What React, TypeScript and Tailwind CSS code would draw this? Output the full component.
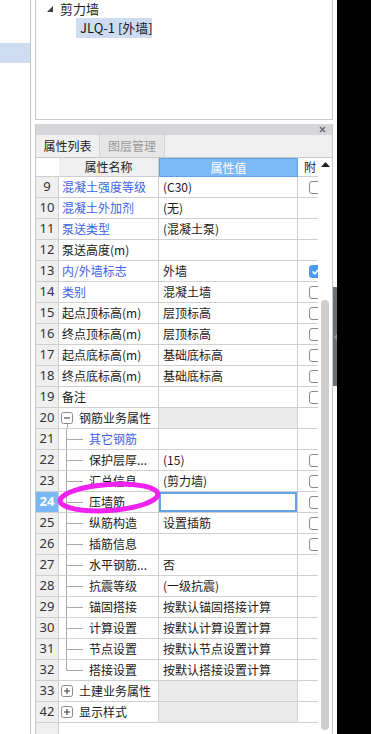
import React from "react";

type Row = {
  n: string;
  name: string;
  val?: string;
  blue?: boolean;
  cb?: boolean;
  checked?: boolean;
  kind?: "normal" | "groupOpen" | "groupClosed" | "child" | "lastChild";
  sel?: boolean;
};

const rows: Row[] = [
  { n: "9", name: "混凝土强度等级", val: "(C30)", blue: true, cb: true },
  { n: "10", name: "混凝土外加剂", val: "(无)", blue: true },
  { n: "11", name: "泵送类型", val: "(混凝土泵)", blue: true },
  { n: "12", name: "泵送高度(m)", val: "" },
  { n: "13", name: "内/外墙标志", val: "外墙", blue: true, cb: true, checked: true },
  { n: "14", name: "类别", val: "混凝土墙", blue: true, cb: true },
  { n: "15", name: "起点顶标高(m)", val: "层顶标高", cb: true },
  { n: "16", name: "终点顶标高(m)", val: "层顶标高", cb: true },
  { n: "17", name: "起点底标高(m)", val: "基础底标高", cb: true },
  { n: "18", name: "终点底标高(m)", val: "基础底标高", cb: true },
  { n: "19", name: "备注", val: "", cb: true },
  { n: "20", name: "钢筋业务属性", kind: "groupOpen" },
  { n: "21", name: "其它钢筋", kind: "child", blue: true },
  { n: "22", name: "保护层厚...", val: "(15)", kind: "child", cb: true },
  { n: "23", name: "汇总信息", val: "(剪力墙)", kind: "child", cb: true },
  { n: "24", name: "压墙筋", val: "", kind: "child", cb: true, sel: true },
  { n: "25", name: "纵筋构造", val: "设置插筋", kind: "child", cb: true },
  { n: "26", name: "插筋信息", val: "", kind: "child", cb: true },
  { n: "27", name: "水平钢筋...", val: "否", kind: "child" },
  { n: "28", name: "抗震等级", val: "(一级抗震)", kind: "child" },
  { n: "29", name: "锚固搭接", val: "按默认锚固搭接计算", kind: "child" },
  { n: "30", name: "计算设置", val: "按默认计算设置计算", kind: "child" },
  { n: "31", name: "节点设置", val: "按默认节点设置计算", kind: "child" },
  { n: "32", name: "搭接设置", val: "按默认搭接设置计算", kind: "lastChild" },
  { n: "33", name: "土建业务属性", kind: "groupClosed" },
  { n: "42", name: "显示样式", kind: "groupClosed" },
];

function GroupBox({ open }: { open: boolean }) {
  return (
    <svg width="14" height="20" className="shrink-0">
      <rect x="1.5" y="4.5" width="11" height="11" rx="2" fill="white" stroke="#8a8a8a" />
      <line x1="4" y1="10" x2="10" y2="10" stroke="#333" />
      {!open && <line x1="7" y1="7" x2="7" y2="13" stroke="#333" />}
      {open && <line x1="7.5" y1="16" x2="7.5" y2="20" stroke="#a8a8a8" />}
    </svg>
  );
}

function TreeLine({ last }: { last: boolean }) {
  return (
    <svg width="30" height="20" className="shrink-0">
      <line x1="7.5" y1="0" x2="7.5" y2={last ? 10.5 : 20} stroke="#a8a8a8" />
      <line x1="7.5" y1="10.5" x2="24" y2="10.5" stroke="#a8a8a8" />
    </svg>
  );
}

function Check({ checked }: { checked?: boolean }) {
  if (checked)
    return (
      <div className="w-[13px] h-[13px] shrink-0 rounded-[3px] bg-[#4a9cf2] border border-[#4a9cf2] flex items-center justify-center">
        <svg width="9" height="9" viewBox="0 0 9 9">
          <path d="M1.5 4.5 L3.8 6.8 L7.5 2.5" fill="none" stroke="white" strokeWidth="1.6" />
        </svg>
      </div>
    );
  return <div className="w-[13px] h-[13px] shrink-0 rounded-[3px] bg-white border border-[#8a8a8a]" />;
}

function DataRow({ r }: { r: Row }) {
  const kind = r.kind ?? "normal";
  const isGroup = kind === "groupOpen" || kind === "groupClosed";
  return (
    <div className="flex h-[21px] border-b border-[#cfcfcf]">
      <div
        className={
          "w-[23px] shrink-0 border-r border-[#cfcfcf] flex items-center justify-center font-['Noto_Sans',sans-serif] text-[13px] " +
          (r.sel ? "bg-[#7ab8f5] text-white font-bold" : "bg-[#efefef] text-[#333]")
        }
      >
        {r.n}
      </div>
      <div className="w-[100px] shrink-0 border-r border-[#cfcfcf] flex items-center overflow-hidden whitespace-nowrap bg-white">
        {kind === "normal" && (
          <span className={"pl-[3px] " + (r.blue ? "text-[#3f5fe6]" : "")}>{r.name}</span>
        )}
        {isGroup && (
          <>
            <div className="pl-[1px] flex">
              <GroupBox open={kind === "groupOpen"} />
            </div>
            <span className="ml-[5px]">{r.name}</span>
          </>
        )}
        {(kind === "child" || kind === "lastChild") && (
          <>
            <TreeLine last={kind === "lastChild"} />
            <span className={r.blue ? "text-[#3f5fe6]" : ""}>{r.name}</span>
          </>
        )}
      </div>
      <div
        className={
          "w-[139px] shrink-0 border-r border-[#cfcfcf] flex items-center pl-[4px] whitespace-nowrap overflow-hidden " +
          (isGroup ? "bg-[#ebebeb]" : "bg-white") +
          (r.sel ? " shadow-[inset_0_0_0_2px_#62a4ea]" : "")
        }
      >
        {r.val}
      </div>
      <div className="w-[20px] shrink-0 overflow-hidden flex items-center pl-[11px] bg-white">
        {r.cb && <Check checked={r.checked} />}
      </div>
    </div>
  );
}

export default function App() {
  return (
    <div className="relative flex w-[371px] h-[734px] overflow-hidden bg-white font-['Noto_Sans_CJK_SC',sans-serif] text-[12px] text-[#1a1a1a]">
      {/* left strip */}
      <div className="w-[31px] shrink-0 border-r border-[#c4c4c8] pt-[43px]">
        <div className="h-[20px] bg-[#cddcf0]" />
      </div>
      <div className="w-[4px] shrink-0" />

      {/* main column */}
      <div className="w-[298px] shrink-0 flex flex-col">
        {/* top tree panel */}
        <div className="h-[120px] shrink-0 border-x border-b border-[#c8c8c8]">
          <div className="h-[17px] flex items-center pl-[11px]">
            <svg width="6" height="6" className="shrink-0">
              <polygon points="6,0 6,6 0,6" fill="#404040" />
            </svg>
            <span className="ml-[7px] text-[13px]">剪力墙</span>
          </div>
          <div className="h-[21px] flex pl-[40px] pt-[1px]">
            <div className="h-[20px] w-[76px] bg-[#cddcf0] flex items-center pl-[4px] text-[13px] whitespace-nowrap">
              JLQ-1 [外墙]
            </div>
          </div>
        </div>
        <div className="h-[4px] shrink-0" />

        {/* property panel */}
        <div className="flex-1 border-x border-[#c8c8c8] flex flex-col min-h-0">
          <div className="h-[11px] shrink-0 bg-[#d5d6da] flex items-center justify-end pr-[6px]">
            <svg width="7" height="7">
              <path d="M1 1 L6 6 M6 1 L1 6" stroke="#6e6e6e" strokeWidth="1.6" />
            </svg>
          </div>
          <div className="h-[23px] shrink-0 bg-[#f0f0f0] border-b border-[#c8c8c8] flex">
            <div className="w-[64px] border-r border-[#d2d2d2] flex items-center justify-center text-[12px] text-[#222]">
              属性列表
            </div>
            <div className="w-[65px] border-r border-[#d2d2d2] bg-[#e6e6e6] flex items-center justify-center text-[12px] text-[#9a9a9a]">
              图层管理
            </div>
          </div>

          <div className="flex flex-1 min-h-0">
            {/* table */}
            <div className="w-[282px] shrink-0 flex flex-col">
              <div className="flex h-[19px] shrink-0">
                <div className="w-[23px] shrink-0 bg-white border-b border-[#cfcfcf]" />
                <div className="w-[100px] shrink-0 bg-[#efefef] border-r border-b border-[#cfcfcf] flex items-center justify-center text-[#222]">
                  属性名称
                </div>
                <div className="w-[139px] shrink-0 bg-[#7cb9f6] border border-[#5fa2ea] flex items-center justify-center text-white">
                  属性值
                </div>
                <div className="w-[20px] shrink-0 overflow-hidden whitespace-nowrap pl-[6px] flex items-center bg-white border-b border-[#cfcfcf]">
                  附
                </div>
              </div>
              {rows.map((r) => (
                <DataRow key={r.n} r={r} />
              ))}
              <div className="flex flex-1">
                <div className="w-[23px] shrink-0 bg-[#efefef] border-r border-[#cfcfcf]" />
              </div>
            </div>
            {/* scrollbar */}
            <div className="w-[14px] shrink-0 flex flex-col">
              <div className="h-[12px] flex items-center justify-center">
                <svg width="9" height="5">
                  <polygon points="4.5,0 9,5 0,5" fill="#222" />
                </svg>
              </div>
              <div className="h-[130px]" />
              <div className="ml-[3px] w-[8px] h-[430px] rounded-[4px] bg-[#cdcdcd]" />
            </div>
          </div>
        </div>
      </div>

      {/* splitter */}
      <div className="w-[4px] shrink-0 pt-[287px]">
        <div className="h-[99px] bg-[#6b7079] flex items-center justify-center">
          <svg width="3" height="6">
            <polygon points="3,0 3,6 0,3" fill="#9aa0a8" />
          </svg>
        </div>
      </div>
      <div className="flex-1 bg-black" />

      {/* annotation ellipse */}
      <svg className="absolute left-0 top-0 pointer-events-none" width="371" height="734">
        <ellipse
          cx="109"
          cy="497.5"
          rx="49"
          ry="13"
          fill="none"
          stroke="#ef22ef"
          strokeWidth="5"
          transform="rotate(-4 109 497.5)"
        />
      </svg>
    </div>
  );
}
